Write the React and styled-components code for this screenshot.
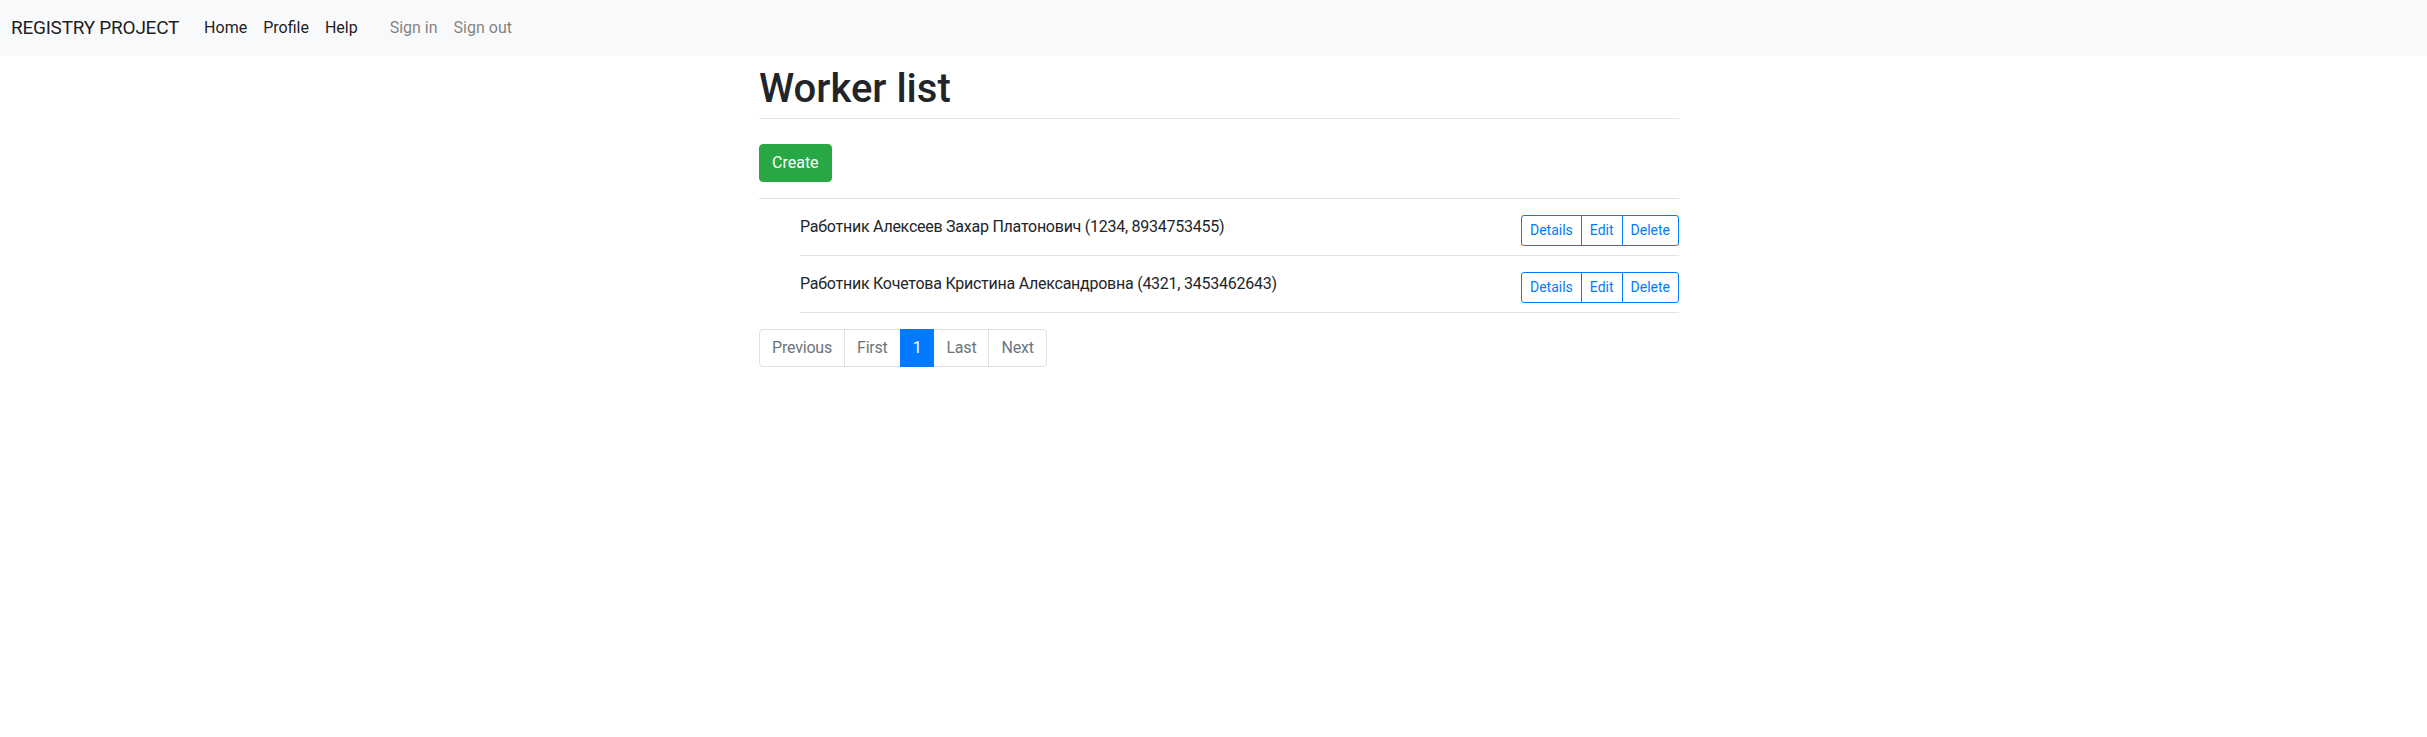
import styled, { createGlobalStyle } from "styled-components";

const GlobalStyle = createGlobalStyle`
	* {
		box-sizing: border-box;
	}
	body {
		margin: 0;
		background: #fff;
		color: #212529;
		font-family: Roboto, "Liberation Sans", sans-serif;
		font-size: 16px;
		line-height: 1.5;
	}
`;

const workers = [
	{ id: 1, name: "Алексеев Захар Платонович", code: "1234", phone: "8934753455" },
	{ id: 2, name: "Кочетова Кристина Александровна", code: "4321", phone: "3453462643" },
];

const pages = [
	{ label: "Previous" },
	{ label: "First" },
	{ label: "1", active: true },
	{ label: "Last" },
	{ label: "Next" },
];

const App = () => {
	return (
		<>
			<GlobalStyle />
			<Navbar>
				<Brand>REGISTRY PROJECT</Brand>
				<NavList>
					<NavLink>Home</NavLink>
					<NavLink>Profile</NavLink>
					<NavLink>Help</NavLink>
				</NavList>
				<NavList $auth>
					<NavLink $muted>Sign in</NavLink>
					<NavLink $muted>Sign out</NavLink>
				</NavList>
			</Navbar>

			<Page>
				<Content>
					<Title>Worker list</Title>
					<Divider />
					<CreateButton>Create</CreateButton>

					<WorkerList>
						{workers.map((w) => (
							<WorkerRow key={w.id}>
								<span>
									Работник {w.name} ({w.code}, {w.phone})
								</span>
								<ButtonGroup>
									<OutlineButton>Details</OutlineButton>
									<OutlineButton>Edit</OutlineButton>
									<OutlineButton>Delete</OutlineButton>
								</ButtonGroup>
							</WorkerRow>
						))}
					</WorkerList>

					<Pagination>
						{pages.map((p) => (
							<PageItem key={p.label} $active={p.active}>
								{p.label}
							</PageItem>
						))}
					</Pagination>
				</Content>
			</Page>
		</>
	);
};

export default App;

const Navbar = styled.nav`
	display: flex;
	align-items: center;
	height: 56px;
	padding: 0 11px;
	background-color: #f8f9fa;
`;

const Brand = styled.a`
	font-size: 19px;
	letter-spacing: -0.25px;
	line-height: 30px;
	color: rgba(0, 0, 0, 0.9);
	margin-right: 17px;
	white-space: nowrap;
`;

const NavList = styled.div`
	display: flex;
	margin-left: ${(p) => (p.$auth ? "16px" : "0")};
`;

const NavLink = styled.a`
	padding: 8px;
	font-size: 16px;
	color: ${(p) => (p.$muted ? "rgba(0, 0, 0, 0.5)" : "rgba(0, 0, 0, 0.9)")};
	cursor: pointer;
`;

const Page = styled.main`
	display: flex;
	justify-content: center;
	padding-left: 11px;
`;

const Content = styled.div`
	width: 920px;
	padding-top: 9px;
`;

const Title = styled.h1`
	margin: 0 0 5px;
	font-size: 40px;
	font-weight: 500;
	line-height: 48px;
	color: #212529;
`;

const Divider = styled.hr`
	margin: 0 0 25px;
	border: 0;
	border-top: 1px solid rgba(0, 0, 0, 0.1);
`;

const CreateButton = styled.button`
	display: block;
	height: 38px;
	padding: 6px 12px;
	font-family: inherit;
	font-size: 16px;
	line-height: 24px;
	color: #fff;
	background-color: #28a745;
	border: 1px solid #28a745;
	border-radius: 4px;
	cursor: pointer;
`;

const WorkerList = styled.ul`
	list-style: none;
	margin: 16px 0 0;
	padding: 0;
	border-top: 1px solid #dee2e6;
`;

const WorkerRow = styled.li`
	display: flex;
	justify-content: space-between;
	align-items: flex-start;
	height: 57px;
	margin-left: 41px;
	padding: 16px 0;
	line-height: 24px;
	letter-spacing: -0.25px;
	border-bottom: 1px solid #dee2e6;
`;

const ButtonGroup = styled.div`
	display: flex;
	letter-spacing: 0;
`;

const OutlineButton = styled.button`
	height: 31px;
	padding: 4px 8px;
	font-family: inherit;
	font-size: 14px;
	line-height: 21px;
	color: #007bff;
	background: transparent;
	border: 1px solid #007bff;
	margin-left: -1px;
	cursor: pointer;

	&:first-child {
		margin-left: 0;
		border-radius: 3px 0 0 3px;
	}

	&:last-child {
		border-radius: 0 3px 3px 0;
	}
`;

const Pagination = styled.div`
	display: flex;
	margin-top: 16px;
`;

const PageItem = styled.a`
	height: 38px;
	padding: 8px 12px;
	margin-left: -1px;
	font-size: 16px;
	letter-spacing: -0.2px;
	line-height: 20px;
	color: ${(p) => (p.$active ? "#fff" : "#6c757d")};
	background-color: ${(p) => (p.$active ? "#007bff" : "#fff")};
	border: 1px solid ${(p) => (p.$active ? "#007bff" : "#dee2e6")};
	position: relative;
	z-index: ${(p) => (p.$active ? 1 : 0)};

	&:first-child {
		margin-left: 0;
		border-radius: 4px 0 0 4px;
	}

	&:last-child {
		border-radius: 0 4px 4px 0;
	}
`;
